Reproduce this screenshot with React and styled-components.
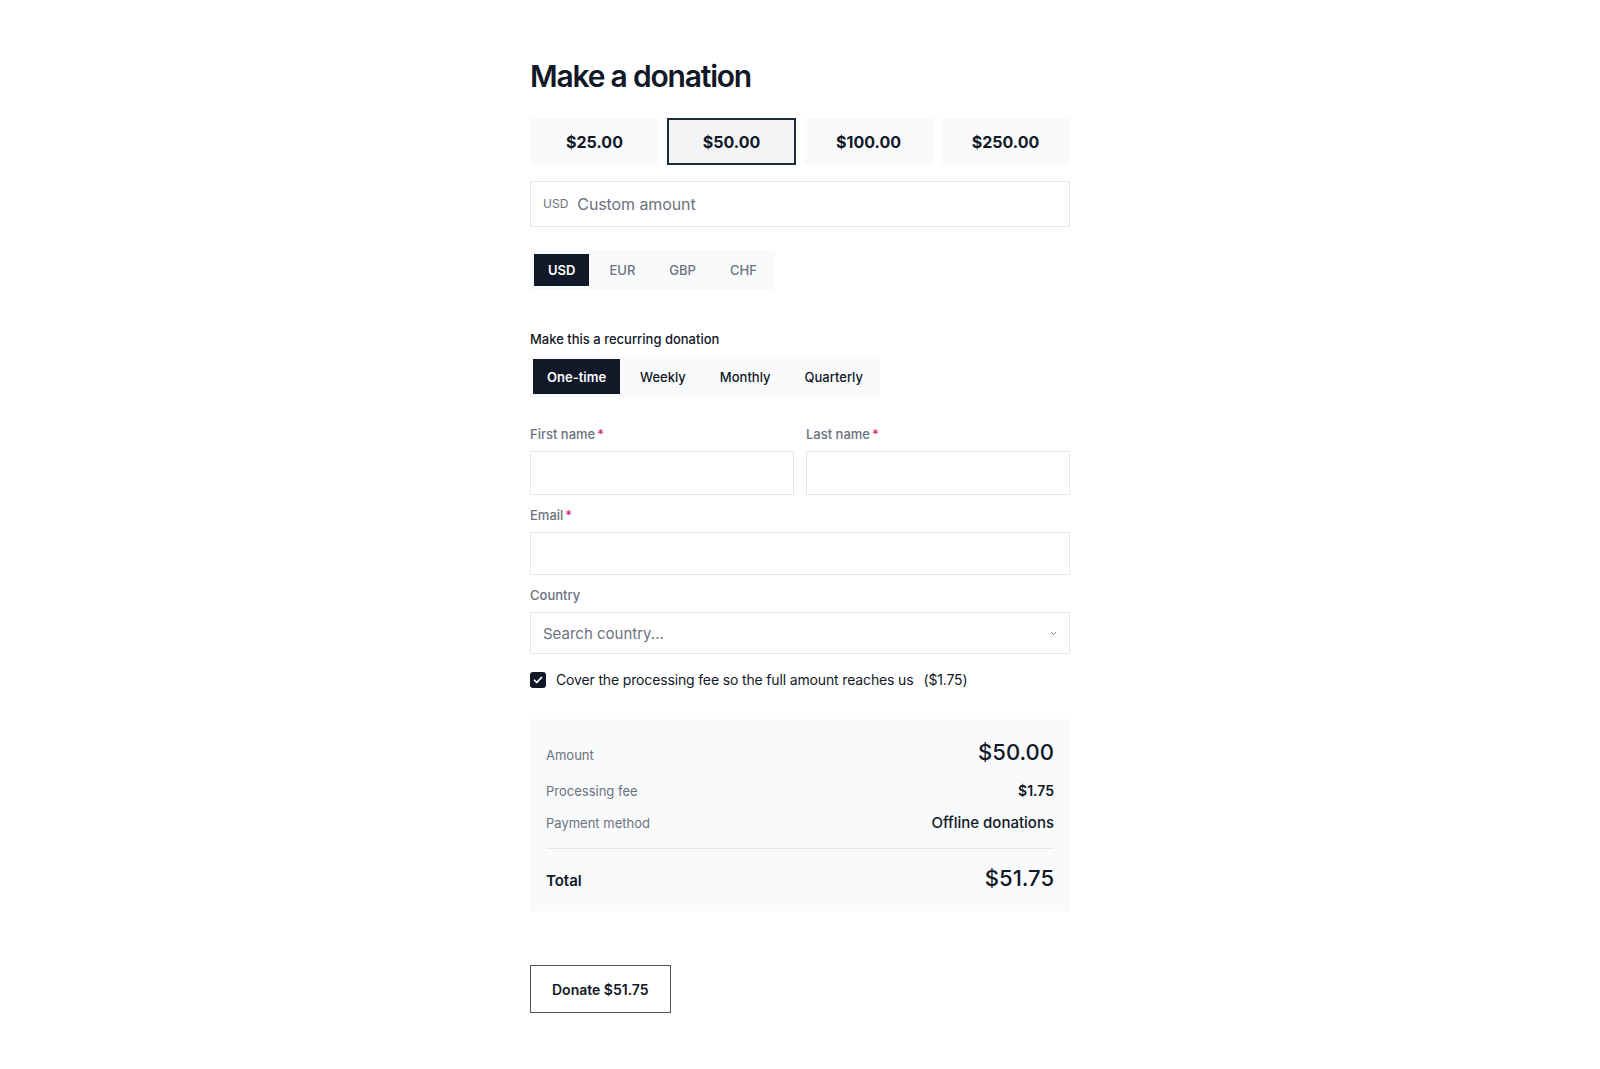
import React, { useState } from 'react'
import styled, { createGlobalStyle } from 'styled-components'

const GlobalStyle = createGlobalStyle`
    * { box-sizing: border-box; }
    body {
        margin: 0;
        background: #ffffff;
        font-family: Inter, "Noto Sans", "Liberation Sans", sans-serif;
        color: #111827;
    }
`

const Page = styled.div`
    display: flex;
    justify-content: center;
    padding: 58px 0 50px;
`

const Form = styled.div`
    width: 540px;
    display: flex;
    flex-direction: column;
`

const Title = styled.h1`
    margin: 0 0 24px;
    font-size: 30px;
    line-height: 36px;
    font-weight: 600;
    letter-spacing: -1.2px;
    color: #111827;
`

const AmountGrid = styled.div`
    display: grid;
    grid-template-columns: repeat(4, minmax(0, 1fr));
    gap: 8px;
    margin-bottom: 16px;
`

const AmountButton = styled.button`
    height: 47px;
    font-family: inherit;
    font-size: 16px;
    font-weight: 700;
    color: #111827;
    background: ${p => (p.$active ? '#f3f4f6' : '#f9fafb')};
    border: 2px solid ${p => (p.$active ? '#1f2937' : 'transparent')};
    border-radius: 0;
    cursor: pointer;
`

const CustomBox = styled.label`
    display: flex;
    align-items: center;
    height: 46px;
    padding: 0 12px;
    border: 1px solid #e5e7eb;
    margin-bottom: 23px;
`

const Prefix = styled.span`
    font-size: 12px;
    color: #6b7280;
    margin-right: 9px;
    margin-top: -2px;
`

const PlainInput = styled.input`
    flex: 1;
    min-width: 0;
    border: none;
    outline: none;
    padding: 0;
    font-family: inherit;
    font-size: 16px;
    letter-spacing: -0.1px;
    color: #111827;
    background: transparent;
    &::placeholder { color: #6b7280; }
`

const Segmented = styled.div`
    display: inline-flex;
    align-self: flex-start;
    gap: 6px;
    padding: ${p => p.$pad};
    background: #f9fafb;
    margin-bottom: ${p => p.$mb || '0'};
`

const Segment = styled.button`
    height: ${p => p.$h};
    padding: 0 14px;
    border: none;
    border-radius: 0;
    font-family: inherit;
    font-size: 13px;
    font-weight: ${p => (p.$active ? 600 : 500)};
    color: ${p => (p.$active ? '#ffffff' : p.$muted ? '#6b7280' : '#111827')};
    background: ${p => (p.$active ? '#111827' : 'transparent')};
    cursor: pointer;
`

const SectionLabel = styled.div`
    font-size: 13px;
    line-height: 20px;
    font-weight: 500;
    color: #111827;
    margin-bottom: 7px;
`

const Row = styled.div`
    display: grid;
    grid-template-columns: minmax(0, 1fr) minmax(0, 1fr);
    gap: 12px;
`

const Field = styled.div`
    display: flex;
    flex-direction: column;
    min-width: 0;
    margin-bottom: ${p => p.$mb || '10px'};
`

const FieldLabel = styled.label`
    font-size: 13px;
    line-height: 20px;
    font-weight: 500;
    color: #6b7280;
    margin-bottom: 7px;
`

const Required = styled.span`
    color: #db2777;
    margin-left: 2px;
`

const TextInput = styled.input`
    width: 100%;
    height: ${p => p.$h || '43px'};
    border: 1px solid #e5e7eb;
    border-radius: 0;
    padding: 0 12px;
    font-family: inherit;
    font-size: 15px;
    color: #111827;
    outline: none;
`

const SelectBox = styled.div`
    display: flex;
    align-items: center;
    justify-content: space-between;
    height: 42px;
    padding: 0 11px 0 12px;
    border: 1px solid #e5e7eb;
    font-size: 15px;
    color: #6b7280;
`

const CheckRow = styled.label`
    display: flex;
    align-items: center;
    gap: 10px;
    font-size: 14px;
    line-height: 20px;
    letter-spacing: -0.15px;
    color: #111827;
    margin-bottom: 29px;
    cursor: pointer;
`

const CheckBox = styled.span`
    width: 16px;
    height: 16px;
    border-radius: 3px;
    background: #111827;
    display: flex;
    align-items: center;
    justify-content: center;
`

const FeeNote = styled.span`
    margin-left: 10px;
`

const Summary = styled.div`
    background: #f9fafb;
    padding: 18px 16px 18px;
    display: flex;
    flex-direction: column;
    margin-bottom: 54px;
`

const SummaryRow = styled.div`
    display: flex;
    justify-content: space-between;
    align-items: baseline;
    margin-top: ${p => p.$mt || '0'};
`

const SummaryLabel = styled.span`
    font-size: ${p => (p.$strong ? '15px' : '13px')};
    color: ${p => (p.$strong ? '#111827' : '#6b7280')};
    font-weight: ${p => (p.$strong ? 600 : 400)};
`

const SummaryValue = styled.span`
    font-size: ${p => p.$size || '14px'};
    line-height: ${p => p.$lh || '20px'};
    font-weight: ${p => p.$weight || 500};
    color: #111827;
`

const Divider = styled.div`
    height: 1px;
    background: #e5e7eb;
    margin: 15px 0 14px;
`

const DonateButton = styled.button`
    align-self: flex-start;
    height: 48px;
    padding: 0 21px;
    background: #ffffff;
    border: 1px solid #4b5563;
    border-radius: 0;
    font-family: inherit;
    font-size: 14px;
    font-weight: 600;
    color: #111827;
    cursor: pointer;
`

const amounts = ['$25.00', '$50.00', '$100.00', '$250.00']
const currencies = ['USD', 'EUR', 'GBP', 'CHF']
const frequencies = ['One-time', 'Weekly', 'Monthly', 'Quarterly']

const Chevron = () => (
    <svg width="9" height="9" viewBox="0 0 24 24" fill="none" stroke="#6b7280" strokeWidth="2.5" strokeLinecap="round" strokeLinejoin="round">
        <path d="M6 9l6 6 6-6" />
    </svg>
)

const Check = () => (
    <svg width="12" height="12" viewBox="0 0 24 24" fill="none" stroke="#ffffff" strokeWidth="3.5" strokeLinecap="round" strokeLinejoin="round">
        <path d="M5 12.5l4.5 4.5L19 7" />
    </svg>
)

export default function App() {
    const [amount, setAmount] = useState('$50.00')
    const [currency, setCurrency] = useState('USD')
    const [frequency, setFrequency] = useState('One-time')

    return (
        <Page>
            <GlobalStyle />
            <Form>
                <Title>Make a donation</Title>

                <AmountGrid>
                    {amounts.map(a => (
                        <AmountButton key={a} $active={a === amount} onClick={() => setAmount(a)}>
                            {a}
                        </AmountButton>
                    ))}
                </AmountGrid>

                <CustomBox>
                    <Prefix>{currency}</Prefix>
                    <PlainInput placeholder="Custom amount" />
                </CustomBox>

                <Segmented $pad="4px" $mb="39px">
                    {currencies.map(c => (
                        <Segment key={c} $h="32px" $muted $active={c === currency} onClick={() => setCurrency(c)}>
                            {c}
                        </Segment>
                    ))}
                </Segmented>

                <SectionLabel>Make this a recurring donation</SectionLabel>
                <Segmented $pad="3px" $mb="27px">
                    {frequencies.map(f => (
                        <Segment key={f} $h="35px" $active={f === frequency} onClick={() => setFrequency(f)}>
                            {f}
                        </Segment>
                    ))}
                </Segmented>

                <Row>
                    <Field>
                        <FieldLabel>First name<Required>*</Required></FieldLabel>
                        <TextInput $h="44px" />
                    </Field>
                    <Field>
                        <FieldLabel>Last name<Required>*</Required></FieldLabel>
                        <TextInput $h="44px" />
                    </Field>
                </Row>

                <Field>
                    <FieldLabel>Email<Required>*</Required></FieldLabel>
                    <TextInput type="email" />
                </Field>

                <Field $mb="16px">
                    <FieldLabel>Country</FieldLabel>
                    <SelectBox>
                        <span>Search country...</span>
                        <Chevron />
                    </SelectBox>
                </Field>

                <CheckRow>
                    <CheckBox><Check /></CheckBox>
                    <span>
                        Cover the processing fee so the full amount reaches us
                        <FeeNote>($1.75)</FeeNote>
                    </span>
                </CheckRow>

                <Summary>
                    <SummaryRow>
                        <SummaryLabel>Amount</SummaryLabel>
                        <SummaryValue $size="22px" $lh="30px">$50.00</SummaryValue>
                    </SummaryRow>
                    <SummaryRow $mt="14px">
                        <SummaryLabel>Processing fee</SummaryLabel>
                        <SummaryValue $weight={600}>$1.75</SummaryValue>
                    </SummaryRow>
                    <SummaryRow $mt="12px">
                        <SummaryLabel>Payment method</SummaryLabel>
                        <SummaryValue $size="15px">Offline donations</SummaryValue>
                    </SummaryRow>
                    <Divider />
                    <SummaryRow>
                        <SummaryLabel $strong>Total</SummaryLabel>
                        <SummaryValue $size="22px" $lh="30px">$51.75</SummaryValue>
                    </SummaryRow>
                </Summary>

                <DonateButton>Donate $51.75</DonateButton>
            </Form>
        </Page>
    )
}
